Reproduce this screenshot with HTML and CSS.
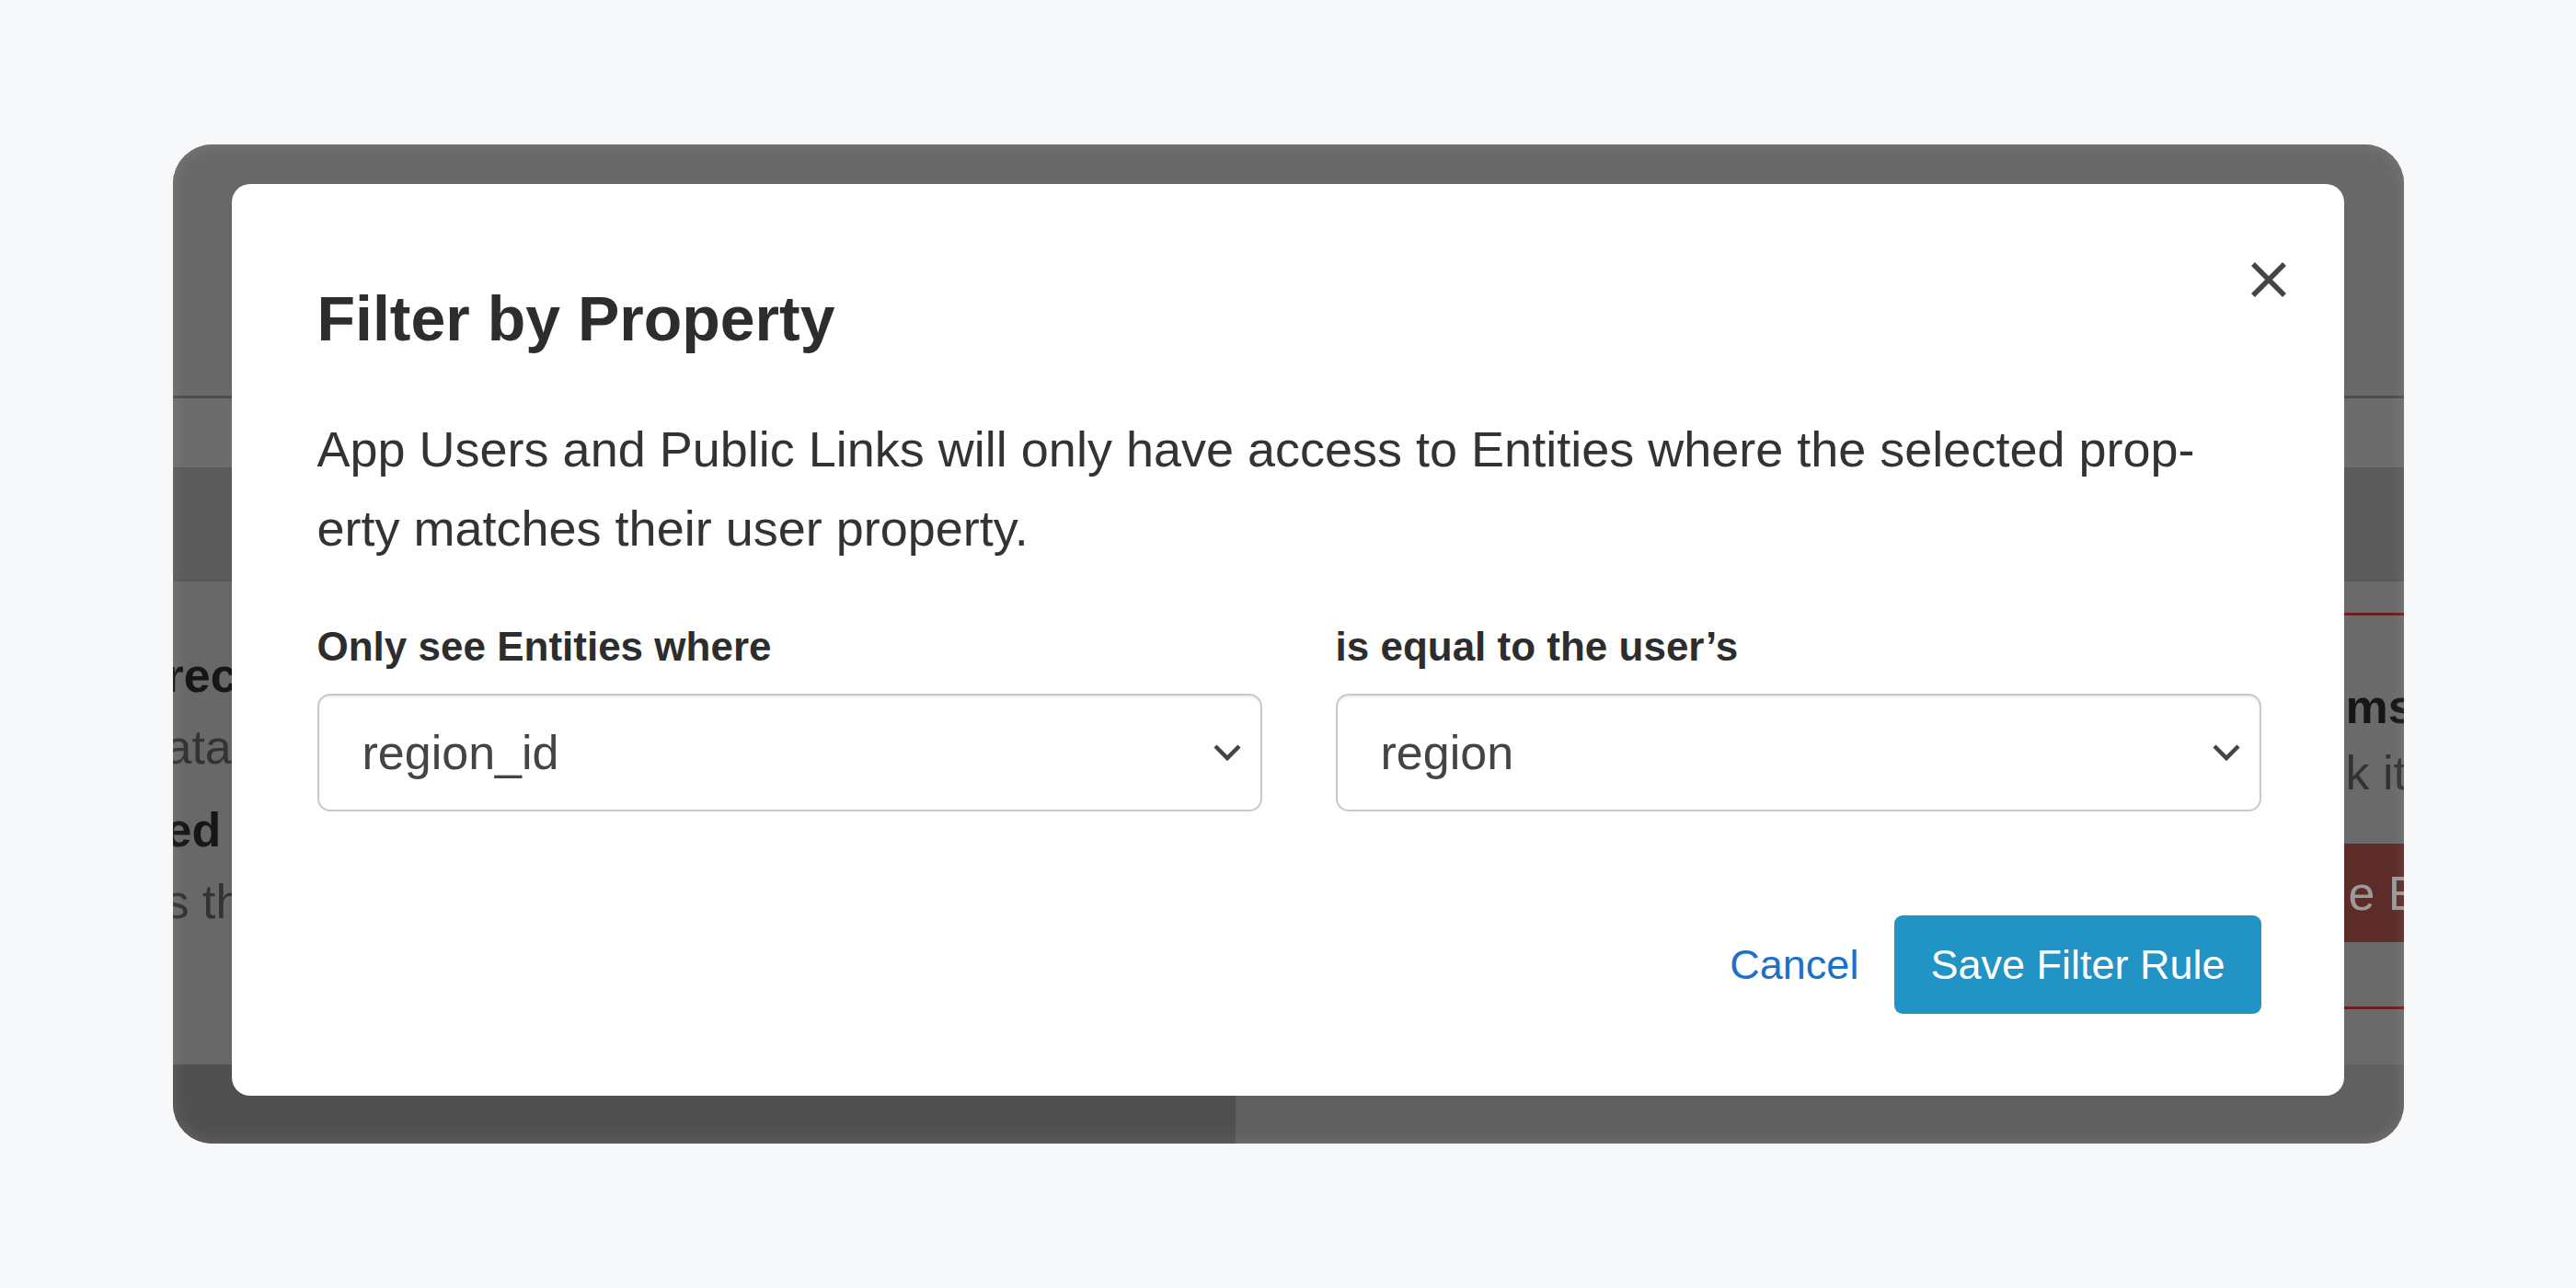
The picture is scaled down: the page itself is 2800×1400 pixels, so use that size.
FILE: index.html
```html
<!DOCTYPE html>
<html lang="en">
<head>
    <meta charset="UTF-8">
    <meta name="viewport" content="width=device-width, initial-scale=1.0">
    <title>Filter by Property</title>
    <link rel="stylesheet" href="styles.css">
</head>
<body>

    <div class="frame">

        <!-- the page behind the modal, dimmed -->
        <div class="backdrop">
            <div class="bd-header"></div>
            <div class="bd-tabs"></div>
            <div class="bd-toolbar"></div>
            <div class="bd-body">
                <div class="bd-left">
                    <p class="bd-line bd-strong">rect Access</p>
                    <p class="bd-line">ata sources</p>
                    <p class="bd-line bd-strong bd-gap">ed Settings</p>
                    <p class="bd-line">s the</p>
                </div>
                <div class="bd-right">
                    <div class="danger-box">
                        <p class="bd-line bd-strong">ms</p>
                        <p class="bd-line">k it</p>
                        <div class="danger-btn">e Entities</div>
                    </div>
                </div>
            </div>
            <div class="bd-footer">
                <div class="bd-footer-left"></div>
                <div class="bd-footer-right"></div>
            </div>
        </div>

        <div class="modal">
            <button class="close-btn" aria-label="Close">
                <svg width="40" height="40" viewBox="0 0 40 40">
                    <path d="M3 3 L37 37 M37 3 L3 37" stroke="#444" stroke-width="5.5" fill="none"/>
                </svg>
            </button>

            <h2 class="modal-title">Filter by Property</h2>

            <p class="modal-text">App Users and Public Links will only have access to Entities where the selected prop-<br>erty matches their user property.</p>

            <div class="fields">
                <div class="field">
                    <label class="field-label">Only see Entities where</label>
                    <div class="select">
                        <span>region_id</span>
                        <svg width="32" height="20" viewBox="0 0 32 20">
                            <polyline points="3,3 16,16 29,3" stroke="#444" stroke-width="4.5" fill="none"/>
                        </svg>
                    </div>
                </div>
                <div class="field">
                    <label class="field-label">is equal to the user’s</label>
                    <div class="select">
                        <span>region</span>
                        <svg width="32" height="20" viewBox="0 0 32 20">
                            <polyline points="3,3 16,16 29,3" stroke="#444" stroke-width="4.5" fill="none"/>
                        </svg>
                    </div>
                </div>
            </div>

            <div class="actions">
                <a class="cancel-link" href="#">Cancel</a>
                <button class="save-btn">Save Filter Rule</button>
            </div>
        </div>

    </div>

</body>
</html>
```

FILE: styles.css
```css
body {
    margin: 0;
    height: 100vh;
    display: flex;
    align-items: center;
    justify-content: center;
    background-color: #f7f8fa;
    font-family: "Liberation Sans", Arial, sans-serif;
}

.frame {
    position: relative;
    width: 2425px;
    height: 1086px;
    border-radius: 43px;
    overflow: hidden;
    background-color: #686868;
}

/* soft light rim around the screenshot */
.frame::after {
    content: "";
    position: absolute;
    inset: 0;
    border-radius: 43px;
    box-shadow: inset 0 0 18px rgba(255, 255, 255, 0.12);
    pointer-events: none;
}

/* dimmed page */
.backdrop {
    display: flex;
    flex-direction: column;
    height: 100%;
}

.bd-header {
    height: 273px;
    background-color: #686868;
    border-bottom: 3px solid #4d4d4d;
}

.bd-tabs {
    height: 75px;
    background-color: #6c6c6c;
}

.bd-toolbar {
    height: 122px;
    background-color: #5b5b5b;
    border-bottom: 2px solid #575757;
}

.bd-body {
    flex: 1;
    display: grid;
    grid-template-columns: 1155px 1fr;
    overflow: hidden;
}

.bd-left {
    padding-top: 63px;
    margin-left: -8px;
    background-color: #686868;
}

.bd-line {
    margin: 0;
    font-size: 52px;
    line-height: 78px;
    white-space: nowrap;
    color: #333;
}

.bd-strong {
    font-weight: bold;
    color: #161616;
}

.bd-gap {
    margin-top: 12px;
}

.bd-right {
    padding-top: 34px;
    background-color: #6a6a6a;
}

.danger-box {
    height: 431px;
    padding-left: 1207px;
    padding-top: 63px;
    box-sizing: border-box;
    border-top: 3px solid #6b1f1f;
    border-bottom: 3px solid #6b1f1f;
}

.danger-box .bd-line {
    line-height: 72px;
}

.danger-btn {
    margin-top: 41px;
    margin-left: -105px;
    height: 107px;
    width: 600px;
    padding-left: 108px;
    display: flex;
    align-items: center;
    font-size: 52px;
    white-space: nowrap;
    color: #9a9a9a;
    background-color: #5d2c28;
}

.bd-footer {
    height: 86px;
    display: grid;
    grid-template-columns: 1155px 1fr;
}

.bd-footer-left {
    background-color: #505050;
}

.bd-footer-right {
    background-color: #606060;
}

/* modal */
.modal {
    position: absolute;
    top: 43px;
    left: 64px;
    right: 65px;
    padding: 106px 90px 89px 93px;
    background-color: white;
    border-radius: 20px;
    color: #333;
}

.close-btn {
    position: absolute;
    top: 84px;
    right: 62px;
    width: 40px;
    height: 40px;
    padding: 0;
    border: none;
    background: none;
    display: flex;
}

.modal-title {
    margin: 0;
    font-size: 68px;
    line-height: 1.2;
    font-weight: bold;
    color: #2d2d2d;
}

.modal-text {
    margin: 57px 0 0;
    font-size: 54px;
    line-height: 86px;
    color: #333;
}

.fields {
    margin-top: 60px;
    display: grid;
    grid-template-columns: 1027px 1006px;
    column-gap: 80px;
}

.field-label {
    display: block;
    font-size: 44px;
    line-height: 1.2;
    font-weight: bold;
    color: #2d2d2d;
}

.select {
    margin-top: 25px;
    height: 128px;
    box-sizing: border-box;
    padding: 0 20px 0 47px;
    display: flex;
    align-items: center;
    justify-content: space-between;
    border: 2px solid #c9c9c9;
    border-radius: 14px;
    box-shadow: inset 0 2px 2px rgba(0, 0, 0, 0.07);
    font-size: 52px;
    color: #444;
}

.actions {
    margin-top: 113px;
    display: flex;
    justify-content: flex-end;
    align-items: center;
    gap: 39px;
}

.cancel-link {
    font-size: 45px;
    color: #1e6fc8;
    text-decoration: none;
}

.save-btn {
    height: 107px;
    padding: 0 39px;
    border: none;
    border-radius: 9px;
    background-color: #2193c4;
    color: white;
    font-family: inherit;
    font-size: 45px;
}
```
